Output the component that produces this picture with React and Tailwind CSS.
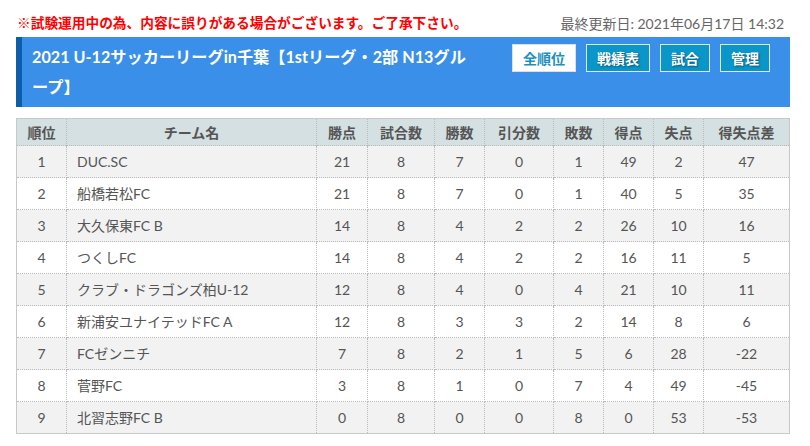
import React from 'react';

const rows = [
  [1, 'DUC.SC', 21, 8, 7, 0, 1, 49, 2, 47],
  [2, '船橋若松FC', 21, 8, 7, 0, 1, 40, 5, 35],
  [3, '大久保東FC B', 14, 8, 4, 2, 2, 26, 10, 16],
  [4, 'つくしFC', 14, 8, 4, 2, 2, 16, 11, 5],
  [5, 'クラブ・ドラゴンズ柏U-12', 12, 8, 4, 0, 4, 21, 10, 11],
  [6, '新浦安ユナイテッドFC A', 12, 8, 3, 3, 2, 14, 8, 6],
  [7, 'FCゼンニチ', 7, 8, 2, 1, 5, 6, 28, -22],
  [8, '菅野FC', 3, 8, 1, 0, 7, 4, 49, -45],
  [9, '北習志野FC B', 0, 8, 0, 0, 8, 0, 53, -53],
];

const heads = ['順位', 'チーム名', '勝点', '試合数', '勝数', '引分数', '敗数', '得点', '失点', '得失点差'];
const widths = ['w-[50px]', 'w-[250px]', 'w-[51px]', 'w-[67px]', 'w-[50px]', 'w-[69px]', 'w-[50px]', 'w-[50px]', 'w-[50px]', 'w-[86px]'];

export default function App() {
  return (
    <div className="w-[810px] h-[446px] bg-white text-[#555] font-['Lato','Noto_Sans_CJK_JP',sans-serif] overflow-hidden">
      <div className="flex items-center justify-between pl-[17px] pr-[26px] pt-[13px] h-[37px] pb-[4px]">
        <p className="text-[13.7px] font-bold text-[#ff0000]">※試験運用中の為、内容に誤りがある場合がございます。ご了承下さい。</p>
        <p className="text-[14px] text-[#666]">最終更新日: 2021年06月17日 14:32</p>
      </div>

      <div className="ml-[16px] mr-[20px] h-[70px] bg-[#3a8fe9] border-l-[6px] border-[#0d5ea8] flex pl-[10px] pr-[20px] pt-[5px]">
        <h1 className="w-[448px] text-white text-[16.2px] font-bold leading-[30px] whitespace-nowrap">
          2021 U-12サッカーリーグin千葉【1stリーグ・2部 N13グル<br />ープ】
        </h1>
        <div className="ml-auto flex gap-[10px] pt-[2px] h-[30px]">
          <span className="w-[64px] h-[28px] flex items-center justify-center bg-white border border-[#dde] text-[#1a8fc0] text-[14px] font-bold">全順位</span>
          {[['戦績表', 'w-[64px]'], ['試合', 'w-[50px]'], ['管理', 'w-[50px]']].map(([t, w]) => (
            <span key={t} className={`${w} h-[28px] flex items-center justify-center bg-[#0a96c8] border border-[#dfe8ee] text-white text-[14px] font-bold [text-shadow:1px_1px_2px_rgba(0,0,0,0.45)]`}>
              {t}
            </span>
          ))}
        </div>
      </div>

      <table className="mx-[16px] mt-[11px] border-collapse border-[1.5px] border-solid border-[#c8c8c8] text-[14px] table-fixed w-[774px]">
        <thead>
          <tr className="h-[27px] bg-[#d4e0e1]">
            {heads.map((h, i) => (
              <th key={h} className={`${widths[i]} font-bold text-[#555] border-x border-dotted border-[#bbb] first:border-l-0 p-0 text-center`}>{h}</th>
            ))}
          </tr>
        </thead>
        <tbody>
          {rows.map((r, ri) => (
            <tr key={ri} className={`h-[32px] ${ri % 2 === 0 ? 'bg-[#f2f2f2]' : 'bg-white'}`}>
              {r.map((c, ci) => (
                <td
                  key={ci}
                  className={`border border-dotted border-[#bbb] p-0 ${ci === 1 ? 'text-left pl-[10px]' : 'text-center'}`}
                >
                  {c}
                </td>
              ))}
            </tr>
          ))}
        </tbody>
      </table>
    </div>
  );
}
